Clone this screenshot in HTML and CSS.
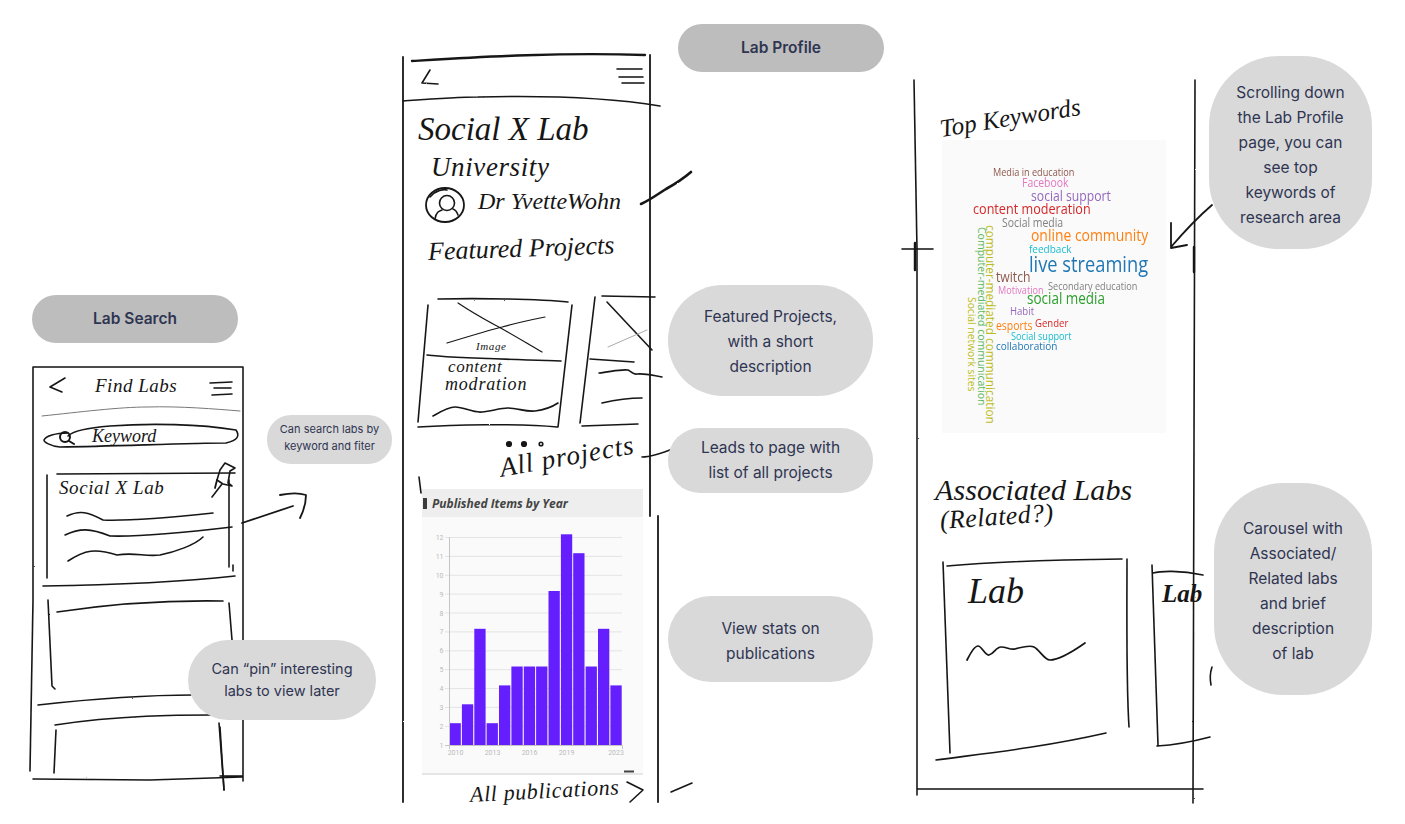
FILE: index.html
```html
<!DOCTYPE html>
<html lang="en">

<head>
    <meta charset="UTF-8">
    <meta name="viewport" content="width=device-width, initial-scale=1.0">
    <link rel="stylesheet" href="styles.css">
    <title>Lab wireframes</title>
</head>

<body>
    <main class="board">
        <!-- all pen strokes of the three sketches -->
        <svg class="strokes" width="1405" height="824" viewBox="0 0 1405 824" fill="none" stroke="#161616"
            stroke-linecap="round" stroke-linejoin="round">
            <defs>
                <filter id="rough" x="0" y="0" width="100%" height="100%" filterUnits="userSpaceOnUse">
                    <feTurbulence type="fractalNoise" baseFrequency="0.35" numOctaves="2" seed="4" />
                    <feDisplacementMap in="SourceGraphic" scale="1.4" />
                </filter>
            </defs>
            <g filter="url(#rough)" stroke-width="1.6">
                <!-- Lab Search phone -->
                <path d="M33 367H243M33 367L33 600L30 771M243 367V781M33 779L150 780L242 777M220 776H243M220 727L224 790" />
                <path d="M42 416C80 412 120 407 147 407C180 406 215 409 240 411" stroke-width="1" stroke="#777" />
                <path d="M65 378L50 387L62 392M210 383L232 382M214 388L231 388M212 395L232 394" />
                <path d="M68 436C72 432 85 428 110 426C150 423 200 424 236 430C240 436 238 440 226 443C190 443 120 446 60 447C50 446 44 442 44 440C46 436 55 433 68 433" />
                <circle cx="65" cy="437" r="5" stroke-width="2" />
                <path d="M69 441L74 444" stroke-width="2" />
                <path d="M57 474L235 473M47 475L47 578M229 480L229 567M233 565V571M43 586C110 585 180 582 235 576" />
                <path d="M67 516C80 510 88 512 103 520C125 521 165 518 213 513" />
                <path d="M65 535C80 528 90 528 110 536C140 537 190 532 232 527" />
                <path d="M68 561C85 550 95 548 117 555C135 552 145 557 160 555C175 552 195 545 203 537" />
                <path d="M225 463L235 468L230 471L228 483L232 486L223 484L217 480L220 470ZM222 484L212 497" />
                <path d="M217 480L215 488M242 523L293 506M280 495C290 493 300 493 306 495C306 505 303 512 300 518" stroke-width="1.8" />
                <path d="M57 612C110 604 160 600 223 601M48 600L52 686L55 689M229 603L232 640" />
                <path d="M38 705C100 698 150 695 194 695M55 725C120 715 180 715 213 715M219 723L224 790M56 730L54 773" />

                <!-- Lab Profile phone -->
                <path d="M412 61C480 57 560 52 645 55" stroke-width="2.4" />
                <path d="M403 57V802M650 55V516M658 516V802M650 503V516" stroke-width="1.8" />
                <path d="M403 101C430 99 455 97 478 97C520 96 600 96 660 106" />
                <path d="M430 70L422 83L438 84" />
                <path d="M617 69L642 69M619 77L643 77M622 83L644 83" />
                <ellipse cx="445" cy="205" rx="19" ry="17" stroke-width="1.8" />
                <path d="M430 197C436 190 444 189 447 190" />
                <circle cx="447" cy="203" r="7.5" />
                <path d="M435 219C436 212 439 211 442 210M458 215C457 212 456 210 453 209" />
                <path d="M641 204C650 200 658 194 666 189C675 184 684 178 691 172" stroke-width="2.6" />

                <path d="M438 299C480 298 540 299 568 302M428 305L418 422M572 305L558 427M418 427C450 425 520 423 557 427" />
                <path d="M458 303C470 311 482 318 495 325C512 334 528 344 542 352M447 343C470 336 490 330 502 327C520 322 535 319 545 317" stroke-width="1.2" />
                <path d="M427 355C450 358 500 359 561 361" />
                <path d="M433 416C440 412 448 407 455 407C465 407 472 413 482 412C492 411 500 408 508 408C518 408 525 412 535 411C543 410 552 407 558 403" />
                <path d="M595 297L580 423M602 296L655 297M582 426L638 424M607 302L652 350" />
                <path d="M608 347L647 330" stroke="#aaa" stroke-width="1" />
                <path d="M590 359L634 362M599 373C610 372 620 369 628 370C632 372 633 375 637 374C645 373 655 376 662 377M602 403C615 400 630 398 642 398" />
                <circle cx="509" cy="444" r="2.3" fill="#161616" />
                <circle cx="524" cy="444" r="2.3" fill="#161616" />
                <circle cx="541" cy="444" r="1.8" />
                <path d="M642 457C650 457 660 454 675 448M419 477L421 493" />
                <path d="M627 782L643 790L630 802M671 792L692 783" stroke-width="1.6" />

                <!-- Keyword and associated labs page -->
                <path d="M914 80L917 250L917 795M1195 80L1193 803M918 789H1203M902 249H933" />
                <path d="M915 243V270M1194 247V272" stroke-width="2.4" />
                <path d="M1212 205C1198 217 1183 233 1171 247M1171 223L1171 248L1187 245" stroke-width="1.8" />
                <path d="M947 566C980 563 1040 560 1122 559M943 562L950 753M1127 559C1127 600 1126 680 1129 727M936 760C980 754 1040 748 1106 733" />
                <path d="M967 660C972 650 975 646 978 646C982 646 985 656 989 655C994 654 996 647 1001 647C1007 647 1010 650 1015 649C1022 647 1030 645 1034 647C1040 650 1044 660 1050 660C1060 660 1075 650 1085 643" stroke-width="1.7" />
                <path d="M1152 565L1158 745M1157 746C1175 745 1195 741 1210 737M1153 573C1160 571 1180 570 1203 575M1212 667C1210 673 1210 680 1211 685" />
            </g>
        </svg>

        <!-- publications chart -->
        <section class="pubs">
            <h3 class="pubs-head">Published Items by Year</h3>
            <div class="pubs-body">
                <svg class="pubs-chart" width="221" height="256" viewBox="422 517 221 256">
                    <g stroke="#e4e4e4" stroke-width="1">
                        <path d="M445 537.5H622M445 556.4H622M445 575.3H622M445 594.1H622M445 613H622M445 631.9H622M445 650.8H622M445 669.7H622M445 688.6H622M445 707.4H622M445 726.3H622" />
                    </g>
                    <g fill="#651fff">
                        <rect x="449.5" y="723.2" width="11.3" height="21.8" />
                        <rect x="461.9" y="704.3" width="11.3" height="40.7" />
                        <rect x="474.3" y="628.8" width="11.3" height="116.2" />
                        <rect x="486.6" y="723.2" width="11.3" height="21.8" />
                        <rect x="499" y="685.4" width="11.3" height="59.6" />
                        <rect x="511.4" y="666.5" width="11.3" height="78.5" />
                        <rect x="523.8" y="666.5" width="11.3" height="78.5" />
                        <rect x="536.1" y="666.5" width="11.3" height="78.5" />
                        <rect x="548.5" y="591" width="11.3" height="154" />
                        <rect x="560.9" y="534.3" width="11.3" height="210.7" />
                        <rect x="573.2" y="553.2" width="11.3" height="191.8" />
                        <rect x="585.6" y="666.5" width="11.3" height="78.5" />
                        <rect x="598" y="628.8" width="11.3" height="116.2" />
                        <rect x="610.4" y="685.4" width="11.3" height="59.6" />
                    </g>
                    <path d="M449.5 537V745.5H622.5M445 745.5H449.5M622.5 745.5V749M449.5 745.5V749" stroke="#c4c4c4" fill="none" />
                    <g class="chart-label" text-anchor="end">
                        <text x="443.500" y="540">12</text>
                        <text x="443.500" y="558.900">11</text>
                        <text x="443.500" y="577.800">10</text>
                        <text x="443.500" y="596.600">9</text>
                        <text x="443.500" y="615.500">8</text>
                        <text x="443.500" y="634.400">7</text>
                        <text x="443.500" y="653.300">6</text>
                        <text x="443.500" y="672.200">5</text>
                        <text x="443.500" y="691.100">4</text>
                        <text x="443.500" y="709.900">3</text>
                        <text x="443.500" y="728.800">2</text>
                        <text x="443.500" y="747.700">1</text>
                    </g>
                    <g class="chart-label" text-anchor="middle">
                        <text x="455.500" y="755">2010</text>
                        <text x="492.500" y="755">2013</text>
                        <text x="529.500" y="755">2016</text>
                        <text x="566.500" y="755">2019</text>
                        <text x="616" y="755">2023</text>
                    </g>
                    <path d="M624 771.500H634" stroke="#444" stroke-width="2" />
                </svg>
            </div>
        </section>

        <!-- keyword cloud -->
        <section class="cloud">
            <span class="word media-education">Media in education</span>
            <span class="word facebook">Facebook</span>
            <span class="word social-support">social support</span>
            <span class="word content-moderation">content moderation</span>
            <span class="word social-media-cap">Social media</span>
            <span class="word online-community">online community</span>
            <span class="word feedback">feedback</span>
            <span class="word live-streaming">live streaming</span>
            <span class="word twitch">twitch</span>
            <span class="word secondary">Secondary education</span>
            <span class="word motivation">Motivation</span>
            <span class="word social-media">social media</span>
            <span class="word habit">Habit</span>
            <span class="word gender">Gender</span>
            <span class="word esports">esports</span>
            <span class="word social-support-cap">Social support</span>
            <span class="word collaboration">collaboration</span>
            <span class="word side cmc-lower">computer-mediated communication</span>
            <span class="word side cmc-upper">Computer-mediated communication</span>
            <span class="word side network">Social network sites</span>
        </section>

        <!-- handwriting -->
        <span class="hand find-labs">Find Labs</span>
        <span class="hand keyword">Keyword</span>
        <span class="hand search-lab">Social X Lab</span>
        <span class="hand lab-title">Social X Lab</span>
        <span class="hand university">University</span>
        <span class="hand doctor">Dr YvetteWohn</span>
        <span class="hand featured">Featured Projects</span>
        <span class="hand image-label">Image</span>
        <span class="hand content-label">content</span>
        <span class="hand moderation-label">modration</span>
        <span class="hand all-projects">All projects</span>
        <span class="hand all-pubs">All publications</span>
        <span class="hand top-keywords">Top Keywords</span>
        <span class="hand associated">Associated Labs</span>
        <span class="hand related">(Related?)</span>
        <span class="hand lab-one">Lab</span>
        <span class="hand lab-two">Lab</span>

        <!-- notes -->
        <div class="pill title search-title">Lab Search</div>
        <div class="pill title profile-title">Lab Profile</div>
        <div class="pill note small-note search-note">Can search labs by<br>keyword and fiter</div>
        <div class="pill note pin-note">Can “pin” interesting<br>labs to view later</div>
        <div class="pill note featured-note">Featured Projects,<br>with a short<br>description</div>
        <div class="pill note leads-note">Leads to page with<br>list of all projects</div>
        <div class="pill note stats-note">View stats on<br>publications</div>
        <div class="pill note scroll-note">Scrolling down<br>the Lab Profile<br>page, you can<br>see top<br>keywords of<br>research area</div>
        <div class="pill note carousel-note">Carousel with<br>Associated/<br>Related labs<br>and brief<br>description<br>of lab</div>
    </main>
</body>

</html>
```

FILE: styles.css
```css
html,
body {
    margin: 0;
    background: #fff;
}

.board {
    position: relative;
    width: 1405px;
    height: 824px;
    overflow: hidden;
    font-family: Inter, "Open Sans", sans-serif;
}

.strokes {
    position: absolute;
    left: 0;
    top: 0;
}

/* handwriting */
.hand {
    position: absolute;
    font-family: "Liberation Serif", serif;
    font-style: italic;
    color: #161616;
    white-space: nowrap;
    line-height: 1;
    transform-origin: left center;
}

.find-labs { left: 95px; top: 376px; font-size: 19px; letter-spacing: 0.5px; }
.keyword { left: 92px; top: 427px; font-size: 18px; }
.search-lab { left: 59px; top: 478px; font-size: 19px; letter-spacing: 0.6px; }
.lab-title { left: 418px; top: 113px; font-size: 33px; }
.university { left: 431px; top: 154px; font-size: 27px; letter-spacing: 0.6px; }
.doctor { left: 478px; top: 189px; font-size: 24px; }
.featured { left: 428px; top: 239px; font-size: 26px; transform: rotate(-2deg); }
.image-label { left: 476px; top: 341px; font-size: 11px; letter-spacing: 0.6px; }
.content-label { left: 448px; top: 358px; font-size: 17px; letter-spacing: 0.6px; }
.moderation-label { left: 445px; top: 375px; font-size: 18px; letter-spacing: 0.8px; }
.all-projects { left: 500px; top: 455px; font-size: 27px; letter-spacing: 1px; transform: rotate(-10deg); }
.all-pubs { left: 470px; top: 784px; font-size: 22px; letter-spacing: 0.6px; transform: rotate(-3deg); }
.top-keywords { left: 940px; top: 116px; font-size: 25px; transform: rotate(-9deg); }
.associated { left: 935px; top: 475px; font-size: 30px; letter-spacing: 0.1px; }
.related { left: 940px; top: 508px; font-size: 26px; letter-spacing: 0.4px; transform: rotate(-4deg); }
.lab-one { left: 968px; top: 573px; font-size: 36px; }
.lab-two { left: 1162px; top: 581px; font-size: 25px; font-weight: bold; }

/* publications chart */
.pubs {
    position: absolute;
    left: 422px;
    top: 489px;
    width: 221px;
    display: flex;
    flex-direction: column;
}

.pubs-head {
    margin: 0;
    height: 28px;
    display: flex;
    align-items: center;
    padding-left: 10px;
    background: #eeeeee;
    font-family: "Open Sans", sans-serif;
    font-size: 12px;
    font-weight: 700;
    font-style: italic;
    color: #444;
    position: relative;
}

.pubs-head::before {
    content: "";
    position: absolute;
    left: 1px;
    top: 9px;
    width: 4px;
    height: 11px;
    background: #3c3c3c;
}

.pubs-body {
    height: 256px;
    background: #fafafa;
    border-bottom: 2px solid #e6e6e6;
}

.pubs-chart {
    display: block;
}

.chart-label {
    font-family: Roboto, sans-serif;
    font-size: 7px;
    fill: #bbbbbb;
}

/* keyword cloud */
.cloud {
    position: absolute;
    left: 942px;
    top: 140px;
    width: 224px;
    height: 293px;
    background: #fafafa;
    font-family: "Open Sans", sans-serif;
}

.word {
    position: absolute;
    line-height: 0.85;
    margin-top: 0.075em;
    white-space: nowrap;
    transform: scaleX(0.87);
    transform-origin: left top;
}

.side {
    writing-mode: vertical-rl;
    margin-top: 0;
    transform: none;
}

.media-education { left: 51px; top: 27px; font-size: 10.5px; color: #8c564b; }
.facebook { left: 80px; top: 37px; font-size: 12px; color: #e377c2; }
.social-support { left: 89px; top: 49px; font-size: 14px; color: #9467bd; }
.content-moderation { left: 31px; top: 62px; font-size: 14.5px; color: #d62728; }
.social-media-cap { left: 60px; top: 77px; font-size: 12px; color: #7f7f7f; }
.online-community { left: 89px; top: 88px; font-size: 16px; color: #ff7f0e; }
.feedback { left: 87px; top: 103px; font-size: 11.5px; color: #17becf; }
.live-streaming { left: 87px; top: 114px; font-size: 21px; color: #1f77b4; }
.twitch { left: 54px; top: 130px; font-size: 14px; color: #8c564b; }
.secondary { left: 106px; top: 141px; font-size: 10.5px; color: #7f7f7f; }
.motivation { left: 56px; top: 145px; font-size: 10.5px; color: #e377c2; }
.social-media { left: 85px; top: 151px; font-size: 15.5px; color: #2ca02c; }
.habit { left: 68px; top: 165px; font-size: 11px; color: #9467bd; }
.gender { left: 93px; top: 177px; font-size: 11px; color: #d62728; }
.esports { left: 54px; top: 180px; font-size: 12px; color: #ff7f0e; }
.social-support-cap { left: 69px; top: 191px; font-size: 10.5px; color: #17becf; }
.collaboration { left: 54px; top: 200px; font-size: 11.5px; color: #1f77b4; }
.cmc-lower { left: 44px; top: 85px; font-size: 11.8px; color: #bcbd22; }
.cmc-upper { left: 35px; top: 87px; font-size: 10.5px; color: #5cb85c; }
.network { left: 25px; top: 157px; font-size: 10.3px; color: #bcbd22; }

/* notes */
.pill {
    position: absolute;
    box-sizing: border-box;
    display: flex;
    align-items: center;
    justify-content: center;
    text-align: center;
    color: #2f3552;
}

.title {
    width: 206px;
    height: 48px;
    padding-bottom: 2px;
    border-radius: 24px;
    background: #bdbdbd;
    font-size: 15.5px;
    font-weight: 600;
}

.note {
    background: #d9d9d9;
    font-size: 15.5px;
    line-height: 25px;
}

.small-note {
    font-size: 11px;
    line-height: 17px;
}

.search-title { left: 32px; top: 295px; }
.profile-title { left: 678px; top: 24px; }
.search-note { left: 267px; top: 415px; width: 125px; height: 49px; padding-bottom: 4px; border-radius: 24px; }
.pin-note { left: 188px; top: 640px; width: 188px; height: 80px; font-size: 14.5px; line-height: 22px; border-radius: 40px; }
.featured-note { left: 668px; top: 285px; width: 205px; height: 111px; padding-top: 2px; border-radius: 55px; }
.leads-note { left: 668px; top: 428px; width: 205px; height: 65px; padding-bottom: 2px; border-radius: 32px; }
.stats-note { left: 668px; top: 596px; width: 205px; height: 86px; padding-top: 4px; border-radius: 43px; }
.scroll-note { left: 1209px; top: 56px; width: 163px; height: 193px; padding-top: 4px; border-radius: 70px; }
.carousel-note { left: 1214px; top: 483px; width: 158px; height: 212px; padding-top: 4px; border-radius: 70px; }
```
